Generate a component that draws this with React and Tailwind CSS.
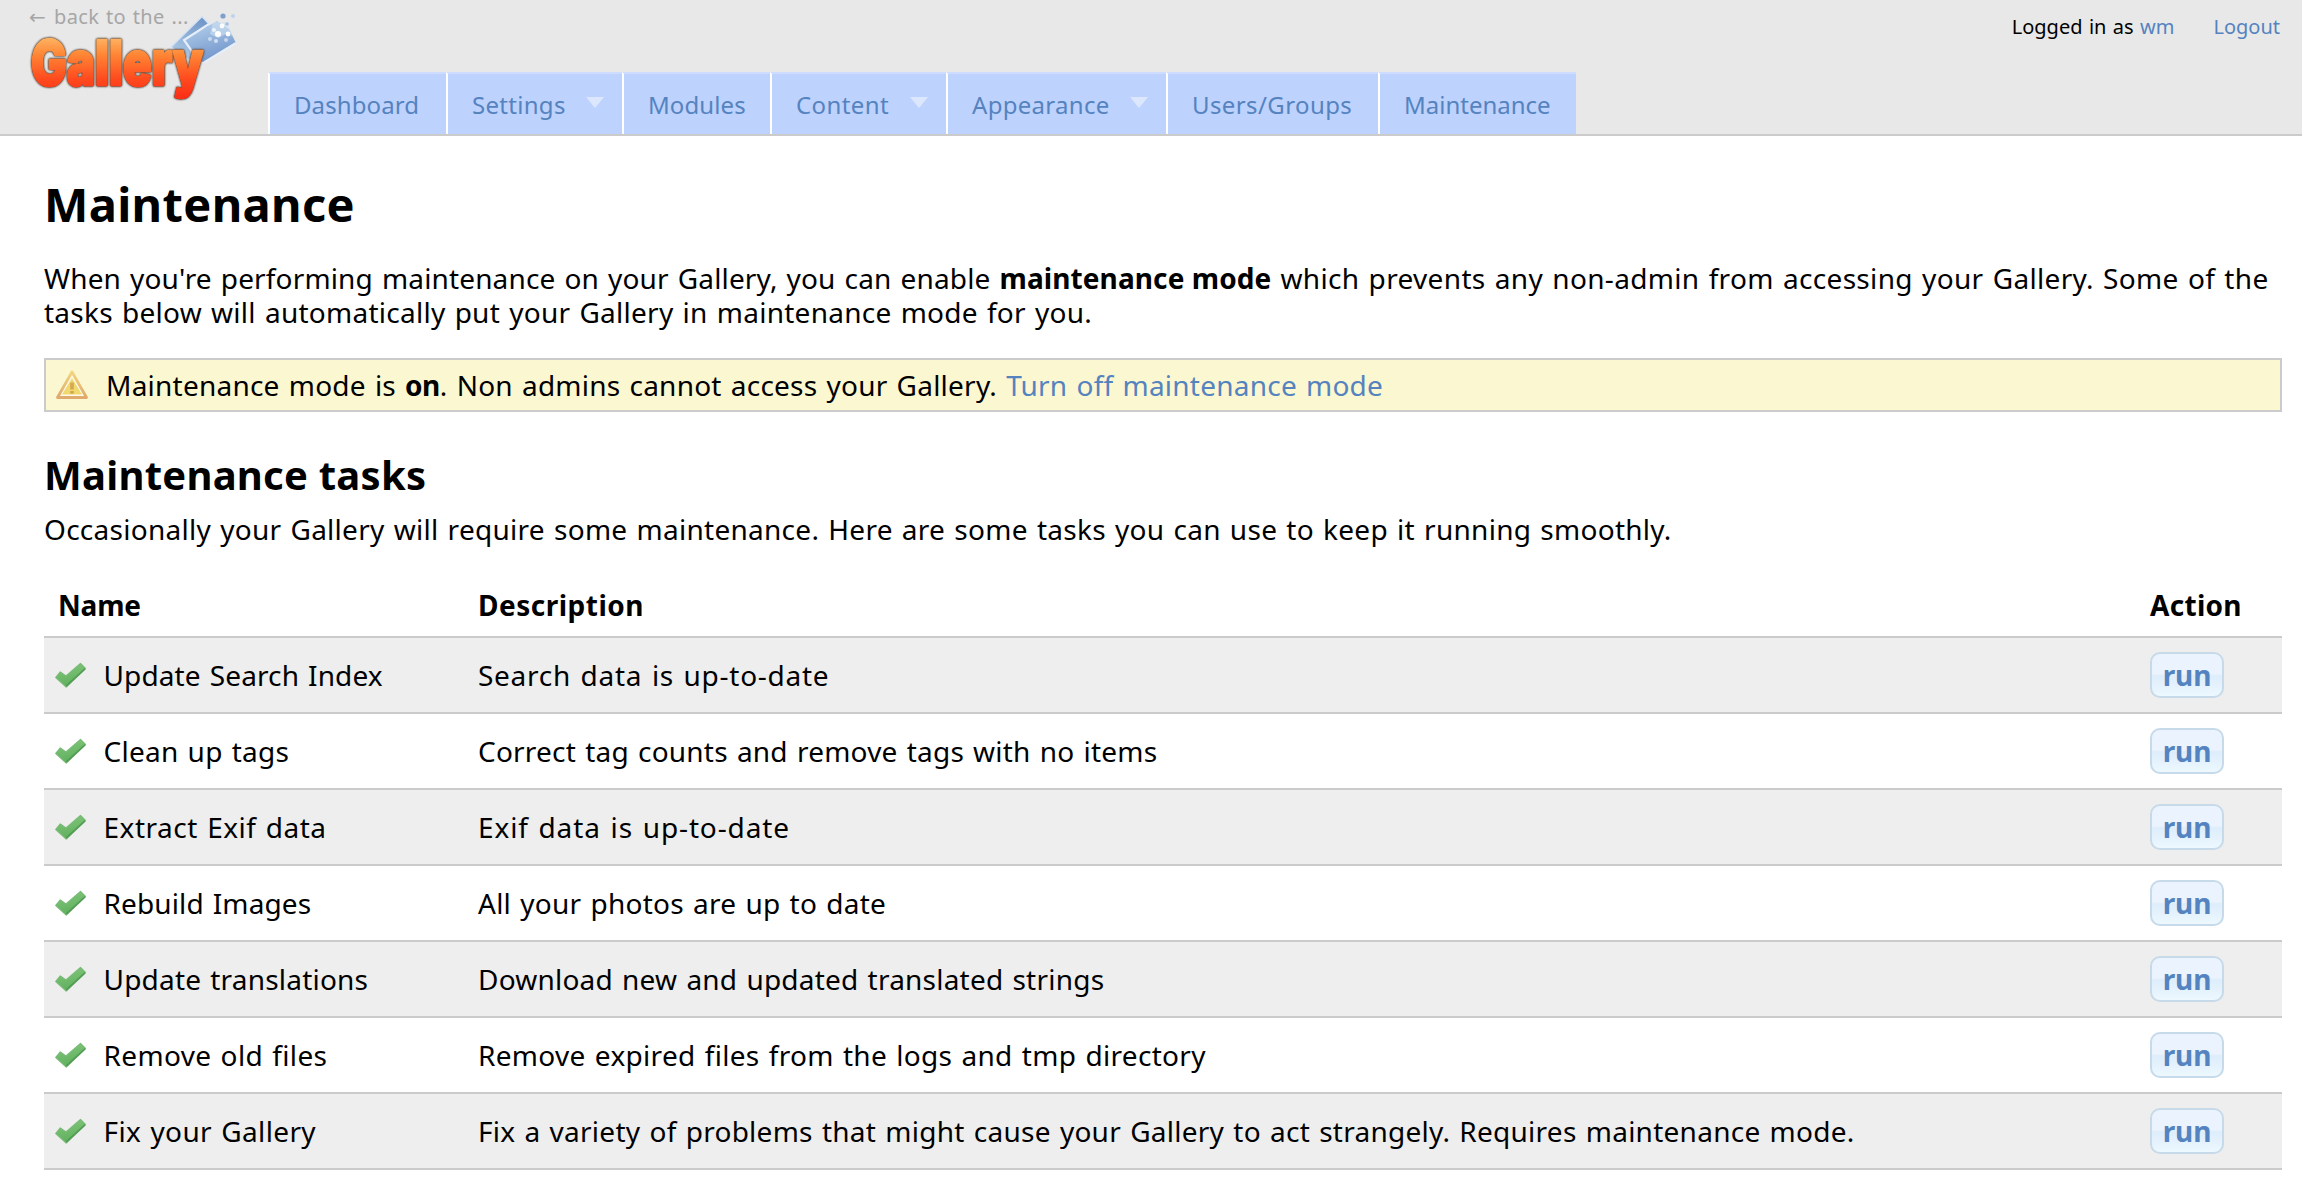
const tabs = [
  { label: "Dashboard", width: "w-[178px]", track: "tracking-[0.1px]" },
  { label: "Settings", width: "w-[176px]", track: "tracking-[0.3px]", menu: true },
  { label: "Modules", width: "w-[148px]", track: "tracking-[0.1px]" },
  { label: "Content", width: "w-[176px]", track: "tracking-[0.4px]", menu: true },
  { label: "Appearance", width: "w-[220px]", track: "tracking-[0.3px]", menu: true },
  { label: "Users/Groups", width: "w-[212px]", track: "tracking-[0.4px]" },
  { label: "Maintenance", width: "w-[198px]", track: "tracking-[0px]" },
];

const tasks = [
  { name: "Update Search Index", nameTrack: "tracking-[0.12px]", description: "Search data is up-to-date", track: "tracking-[0.73px]" },
  { name: "Clean up tags", nameTrack: "tracking-[0.25px]", description: "Correct tag counts and remove tags with no items", track: "tracking-[0.22px]" },
  { name: "Extract Exif data", nameTrack: "tracking-[0.5px]", description: "Exif data is up-to-date", track: "tracking-[0.88px]" },
  { name: "Rebuild Images", nameTrack: "tracking-[0.12px]", description: "All your photos are up to date", track: "tracking-[0.25px]" },
  { name: "Update translations", nameTrack: "tracking-[0.2px]", description: "Download new and updated translated strings", track: "tracking-[0.22px]" },
  { name: "Remove old files", nameTrack: "tracking-[0.35px]", description: "Remove expired files from the logs and tmp directory", track: "tracking-[0.31px]" },
  {
    name: "Fix your Gallery",
    nameTrack: "tracking-[0.37px]",
    description: "Fix a variety of problems that might cause your Gallery to act strangely. Requires maintenance mode.",
    track: "tracking-[0.26px]",
  },
];

function Logo() {
  return (
    <svg className="absolute left-0 top-0 h-[120px] w-[250px] overflow-visible" viewBox="0 0 250 120">
      <defs>
        <linearGradient id="word" gradientUnits="userSpaceOnUse" x1="0" y1="37" x2="0" y2="97">
          <stop offset="0" stopColor="#ffb665" />
          <stop offset="0.3" stopColor="#ff8534" />
          <stop offset="0.7" stopColor="#ff4a1e" />
          <stop offset="1" stopColor="#fb2f16" />
        </linearGradient>
        <linearGradient id="photo" x1="0" y1="0" x2="0.4" y2="1">
          <stop offset="0" stopColor="#bcd6ee" />
          <stop offset="1" stopColor="#7397cd" />
        </linearGradient>
        <linearGradient id="photoBack" x1="0.8" y1="0" x2="0.2" y2="1">
          <stop offset="0" stopColor="#6c93c6" />
          <stop offset="1" stopColor="#b3cee8" />
        </linearGradient>
      </defs>
      <path d="M171 47L202 16.500L209 24L214 40L192 62Z" fill="url(#photoBack)" stroke="#d6e3f4" strokeWidth="1.500" />
      <path d="M184 40L217 21L229 29L236 43L204 62L193 60Z" fill="url(#photo)" />
      <path d="M209 24L184 40L191 50L193 60M236 43L204 62.500" fill="none" stroke="#e6eefa" strokeWidth="2.200" />
      <path d="M213 22L228 22L232 36L226 34L218 38L210 34Z" fill="#d3e4f3" opacity="0.55" />
      <g fill="#fff">
        <circle cx="218" cy="34" r="3" />
        <circle cx="222" cy="26" r="2.400" opacity="0.9" />
        <circle cx="228" cy="34" r="2.400" />
        <circle cx="216" cy="41" r="2" opacity="0.6" />
        <circle cx="210" cy="39" r="2" opacity="0.5" />
        <circle cx="226" cy="40" r="2" opacity="0.5" />
        <circle cx="214" cy="30" r="2" opacity="0.7" />
      </g>
      <circle cx="223" cy="16" r="2.600" fill="#7f9fcd" />
      <circle cx="233" cy="16" r="2" fill="#bcd4ec" />
      <circle cx="227" cy="24" r="1.800" fill="#a3c0e2" />
      <text
        x="31"
        y="85"
        textLength="172"
        lengthAdjust="spacingAndGlyphs"
        fontFamily="Inter"
        fontWeight="900"
        fontSize="62"
        fill="url(#word)"
        stroke="url(#word)"
        strokeWidth="2.600"
        strokeLinejoin="round"
        className="[filter:drop-shadow(0_0_0.8px_#5c4a3c)_drop-shadow(0_0_0.5px_#5c4a3c)]"
      >
        Gallery
      </text>
    </svg>
  );
}

function Check() {
  return (
    <svg className="h-8 w-8 shrink-0" viewBox="0 0 32 32">
      <defs>
        <linearGradient id="tick" x1="0" y1="0" x2="0.3" y2="1">
          <stop offset="0" stopColor="#84c87c" />
          <stop offset="1" stopColor="#5fb05e" />
        </linearGradient>
      </defs>
      <path d="M1.800 18.500L6.300 13L12 17L26.500 4.500L31.500 9.500L12.200 28Z" fill="url(#tick)" stroke="#79ba77" strokeWidth="1.200" strokeLinejoin="round" />
      <path d="M12.200 27.200L31 9.800" stroke="#468f49" strokeWidth="1.600" opacity="0.7" />
    </svg>
  );
}

function Warning() {
  return (
    <svg className="h-8 w-8 shrink-0 opacity-85" viewBox="0 0 32 32">
      <defs>
        <linearGradient id="warn" x1="0" y1="0" x2="0" y2="1">
          <stop offset="0" stopColor="#f0d070" />
          <stop offset="1" stopColor="#dc9c5c" />
        </linearGradient>
      </defs>
      <path d="M16 3L30.500 28.500H1.500Z" fill="#fffaf0" stroke="url(#warn)" strokeWidth="2.800" strokeLinejoin="round" />
      <path d="M16 9L26 25.500H6Z" fill="#efd560" />
      <path d="M14.200 13.500H17.800V20.500H14.200ZM14.200 22H17.800V24.800H14.200Z" fill="#cf9a3c" />
    </svg>
  );
}

export default function App() {
  return (
    <div className="min-h-[1198px] w-full bg-white font-['Noto_Sans',sans-serif] text-[28px] leading-[34px] text-black">
      <header className="relative flex h-[136px] items-end border-b-2 border-[#cbcbcb] bg-[#e8e8e8] pl-[268px]">
        <Logo />
        <a className="absolute left-[29px] top-[3px] flex h-7 items-center text-[20px] leading-7 text-[#a6a6a6]">
          <span className="w-[25px] font-['DejaVu_Sans']">←</span>
          <span className="tracking-[0.4px] [word-spacing:1px]">back to the ...</span>
        </a>
        <div className="absolute right-[22px] top-[13px] flex gap-[39px] text-[20px] leading-7">
          <span className="[word-spacing:1.2px]">
            Logged in as <a className="text-[#5583bf]">wm</a>
          </span>
          <a className="text-[#5583bf]">Logout</a>
        </div>
        <nav className="flex h-[62px]">
          {tabs.map((t) => (
            <a
              key={t.label}
              className={`flex items-center justify-between border-l-2 border-t-2 border-l-white border-t-[#cddcff] bg-[#bed2fe] pl-6 pr-[18px] pt-0.5 text-[24px] text-[#5583bf] ${t.width} ${t.track}`}
            >
              {t.label}
              {t.menu && (
                <svg className="mb-1.5 h-[11px] w-[18px]" viewBox="0 0 18 11">
                  <path d="M0 0H18L9 11Z" fill="#dce7fe" />
                </svg>
              )}
            </a>
          ))}
        </nav>
      </header>

      <main className="flex flex-col pl-[44px] pr-5 pt-[38px]">
        <h1 className="text-[47px] font-bold leading-[60px] tracking-[0.35px]">Maintenance</h1>
        <p className="mt-[27px] whitespace-nowrap tracking-[0.15px] [word-spacing:1.6px]">
          When you're performing maintenance on your Gallery, you can enable{" "}
          <strong className="tracking-[0.1px] [word-spacing:0]">maintenance mode</strong>{" "}
          <span className="tracking-[0.33px]">which prevents any non-admin from accessing your Gallery. Some of the</span>
          <br />
          <span className="tracking-[0.26px]">tasks below will automatically put your Gallery in maintenance mode for you.</span>
        </p>
        <div className="mt-[29px] flex h-[54px] items-center gap-[18px] border-2 border-[#cbcbcb] bg-[#fbf7d0] pl-[10px] tracking-[0.23px] [word-spacing:1.6px]">
          <Warning />
          <span>
            Maintenance mode is <strong className="tracking-[-0.5px]">on</strong>. Non admins cannot access your Gallery.{" "}
            <a className="text-[#5583bf]">Turn off maintenance mode</a>
          </span>
        </div>
        <h2 className="mt-[38px] text-[40px] font-bold leading-[50px] tracking-[0.25px]">Maintenance tasks</h2>
        <p className="mt-3 tracking-[0.27px] [word-spacing:1.6px]">
          Occasionally your Gallery will require some maintenance. Here are some tasks you can use to keep it running smoothly.
        </p>

        <section className="mt-[28px] [word-spacing:1.6px]">
          <div className="grid h-16 grid-cols-[434px_1fr_132px] items-center border-b-2 border-[#cbcbcb] font-bold">
            <span className="pl-[14px] tracking-[-0.2px]">Name</span>
            <span className="tracking-[0.5px]">Description</span>
            <span className="tracking-[0.3px]">Action</span>
          </div>
          {tasks.map((task) => (
            <div
              key={task.name}
              className="grid h-[76px] grid-cols-[434px_1fr_132px] items-center border-b-2 border-[#cbcbcb] odd:bg-white even:bg-[#eeeeee]"
            >
              <span className={`flex items-center gap-[17.500px] pl-[10px] ${task.nameTrack}`}>
                <Check />
                {task.name}
              </span>
              <span className={task.track}>{task.description}</span>
              <button className="flex h-[46px] w-[74px] items-center justify-center rounded-[10px] border-2 border-[#c6daea] bg-[linear-gradient(#ebf3fe_0%,#eaf3fe_48%,#ddedfb_52%,#edf8ff_100%)] font-bold tracking-[-0.1px] text-[#5583bf]">
                run
              </button>
            </div>
          ))}
        </section>
      </main>
    </div>
  );
}
